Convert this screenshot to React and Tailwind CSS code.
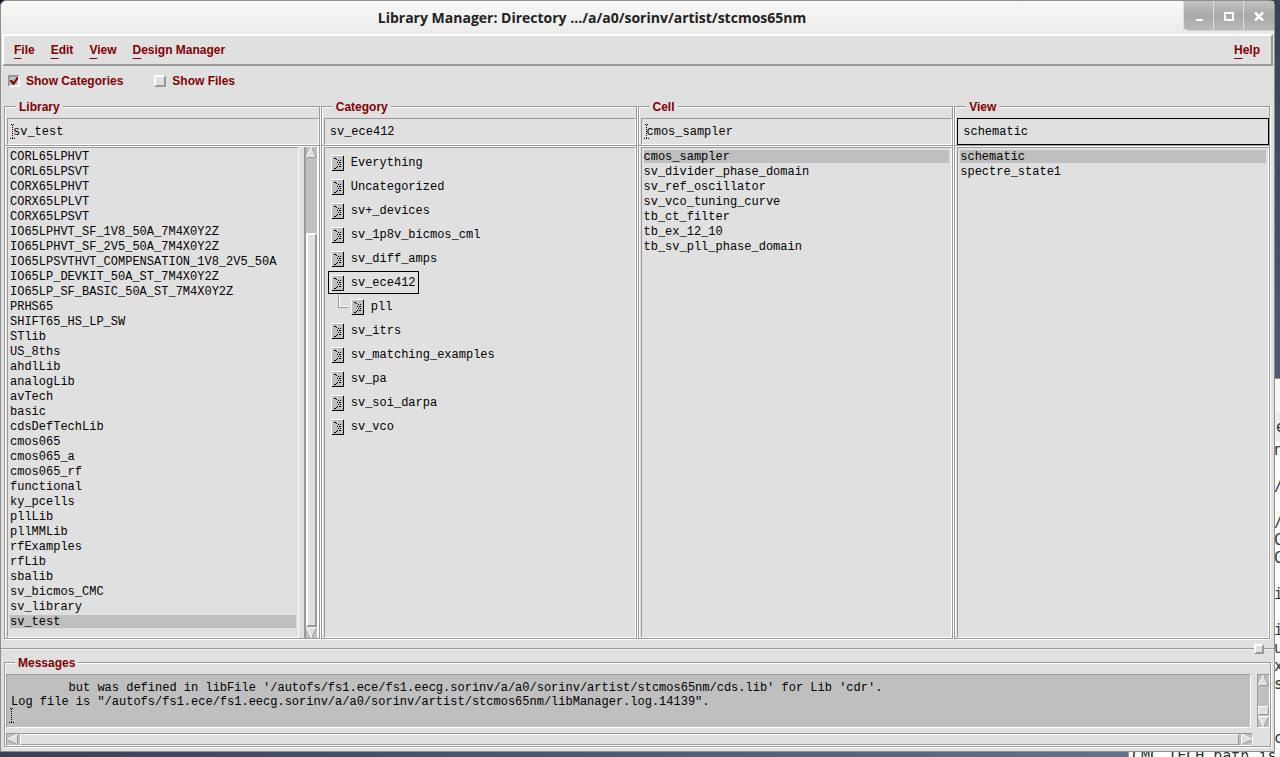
import React, { useState } from "react";

const LIBRARIES = [
  "CORL65LPHVT", "CORL65LPSVT", "CORX65LPHVT", "CORX65LPLVT", "CORX65LPSVT",
  "IO65LPHVT_SF_1V8_50A_7M4X0Y2Z", "IO65LPHVT_SF_2V5_50A_7M4X0Y2Z",
  "IO65LPSVTHVT_COMPENSATION_1V8_2V5_50A", "IO65LP_DEVKIT_50A_ST_7M4X0Y2Z",
  "IO65LP_SF_BASIC_50A_ST_7M4X0Y2Z", "PRHS65", "SHIFT65_HS_LP_SW", "STlib",
  "US_8ths", "ahdlLib", "analogLib", "avTech", "basic", "cdsDefTechLib",
  "cmos065", "cmos065_a", "cmos065_rf", "functional", "ky_pcells", "pllLib",
  "pllMMLib", "rfExamples", "rfLib", "sbalib", "sv_bicmos_CMC", "sv_library",
  "sv_test",
];

const CATEGORIES = [
  { name: "Everything" },
  { name: "Uncategorized" },
  { name: "sv+_devices" },
  { name: "sv_1p8v_bicmos_cml" },
  { name: "sv_diff_amps" },
  { name: "sv_ece412" },
  { name: "pll", child: true },
  { name: "sv_itrs" },
  { name: "sv_matching_examples" },
  { name: "sv_pa" },
  { name: "sv_soi_darpa" },
  { name: "sv_vco" },
];

const CELLS = [
  "cmos_sampler", "sv_divider_phase_domain", "sv_ref_oscillator",
  "sv_vco_tuning_curve", "tb_ct_filter", "tb_ex_12_10",
  "tb_sv_pll_phase_domain",
];

const VIEWS = ["schematic", "spectre_state1"];

const TERMINAL_ROWS = [
  "n", "", "/", "", "/", "C", "C", "", "i", "", "i", "u", "x", "s", "", "", "c",
];

const MESSAGES = `        but was defined in libFile '/autofs/fs1.ece/fs1.eecg.sorinv/a/a0/sorinv/artist/stcmos65nm/cds.lib' for Lib 'cdr'.
Log file is "/autofs/fs1.ece/fs1.eecg.sorinv/a/a0/sorinv/artist/stcmos65nm/libManager.log.14139".
`;

const ETCHED =
  "border border-[#999] shadow-[1px_1px_0_#fff,inset_1px_1px_0_#fff]";
const SUNKEN = "border border-t-[#999] border-l-[#999] border-b-white border-r-white";

function Caret({ className }) {
  return (
    <svg viewBox="0 0 5 15" className={`pointer-events-none absolute h-[15px] w-[5px] ${className}`} shapeRendering="crispEdges" aria-hidden="true">
      <path
        d="M1 .5h1M3 .5h1M2 1.5h1M2 3.5h1M2 5.5h1M2 7.5h1M2 9.500h1M2 11.5h1M2 13.5h1M0 14.5h1M2 14.5h1M4 14.5h1"
        stroke="#000"
        fill="none"
      />
    </svg>
  );
}

function CategoryIcon() {
  return (
    <svg viewBox="0 0 13 16" className="h-4 w-[13px] shrink-0" shapeRendering="crispEdges" aria-hidden="true">
      <rect width="13" height="16" fill="#bfbfbf" />
      <path d="M0 .5h12M.5 0v15" stroke="#fff" />
      <path d="M1 15.5h12M12.5 1v15" stroke="#000" />
      <path
        d="M3 3.5h2M5 4.5h1M7 5.5h1M9 5.5h1M6 7.5h1M8 7.5h2M7 9.5h1M9 9.5h1M6 11.5h1M8 11.5h2M5 12.5h1M3 13.5h2"
        stroke="#000"
      />
    </svg>
  );
}

function Arrow({ dir, label }) {
  const shapes = {
    up: ["M5.5 0 11 11H0Z", "M5.5 0 0 11", "M5.5 0 10.5 10.5H0"],
    down: ["M0 0h11L5.5 11Z", "M11 .5H.5L5.5 11", "M11 0 5.5 11"],
    left: ["M0 5.5 11 0v11Z", "M11 0 0 5.5", "M0 5.5 10.5 10.5V0"],
    right: ["M11 5.5 0 0v11Z", "M.5 11V0L11 5.5", "M11 5.5 0 11"],
  };
  const [fill, light, dark] = shapes[dir];
  return (
    <button aria-label={label} className="flex h-[11px] w-[11px] shrink-0 bg-[#bfbfbf]">
      <svg viewBox="0 0 11 11" className="h-[11px] w-[11px]" aria-hidden="true">
        <path d={fill} fill="#e0e0e0" />
        <path d={dark} stroke="#999" fill="none" />
        <path d={light} stroke="#fff" fill="none" />
      </svg>
    </button>
  );
}

function PanelTitle({ children }) {
  return (
    <span className="relative -mt-2 ml-[9px] self-start bg-[#e0e0e0] px-[3px] text-[12px] leading-4 font-bold text-[#800000]">
      {children}
    </span>
  );
}

function Panel({ title, value, onChange, focused, caret, children }) {
  return (
    <section className={`mr-px mb-px flex min-w-0 flex-col pl-0.5 ${ETCHED}`}>
      <PanelTitle>{title}</PanelTitle>
      <div className="relative mt-[3px] flex">
        <input
          aria-label={title}
          value={value}
          onChange={(e) => onChange(e.target.value)}
          className={`h-[27px] w-full min-w-0 bg-[#e0e0e0] pl-[5px] font-['Liberation_Mono',monospace] text-[12px] ${SUNKEN} ${
            focused ? "outline-1 -outline-offset-1 outline-black" : "outline-none"
          }`}
        />
        {caret && <Caret className="top-1.5 left-[3px]" />}
      </div>
      <div className="-ml-0.5 h-0.5 border-t border-b border-t-[#999] border-b-white" />
      {children}
    </section>
  );
}

function NameList({ items, selected, onSelect, label }) {
  return (
    <ul aria-label={label} className={`min-w-0 flex-1 pt-px pr-0.5 pl-0.5 ${SUNKEN}`}>
      {items.map((item) => (
        <li key={item} className="flex py-px">
          <button
            onClick={() => onSelect(item)}
            className={`h-[13px] w-full text-left leading-[15px] whitespace-nowrap ${
              item === selected ? "bg-[#bfbfbf]" : ""
            }`}
          >
            {item}
          </button>
        </li>
      ))}
    </ul>
  );
}

function MenuItem({ children }) {
  return (
    <button className="leading-4 font-bold text-[#800000] first-letter:underline first-letter:underline-offset-4">
      {children}
    </button>
  );
}

function TitleButton({ label, children }) {
  return (
    <button aria-label={label} className="flex w-[30px] items-center justify-center border-l border-[#ddd] last:w-[31px]">
      <svg viewBox="0 0 14 14" className="mt-0.5 h-3.5 w-3.5" fill="none" stroke="#fff" aria-hidden="true">
        {children}
      </svg>
    </button>
  );
}

export default function App() {
  const [library, setLibrary] = useState("sv_test");
  const [category, setCategory] = useState("sv_ece412");
  const [cell, setCell] = useState("cmos_sampler");
  const [view, setView] = useState("schematic");

  return (
    <div className="relative flex min-h-screen w-full overflow-hidden bg-linear-to-br from-[#0e1222] to-[#6a7694] pr-[5px] pb-[5px] font-['Liberation_Mono',monospace] text-[12px] text-black">
      <div className="absolute top-[378px] right-0 bottom-0 left-[1128px] overflow-hidden border-t border-l border-[#999] bg-white font-['DejaVu_Sans_Mono',monospace] text-[15px] leading-[18px] text-[#2e3436]">
        <div className="h-8 bg-[#f8f8f7]" />
        <div className="h-[30px] bg-[#ededed] pt-[7px] pl-[147px]">e</div>
        {TERMINAL_ROWS.map((row, i) => (
          <div key={i} className="h-[18px] pl-[145px]">{row}</div>
        ))}
        <div className="h-[18px] pl-[3px] whitespace-pre">CMC_TECH path is</div>
      </div>

      <main className="relative flex min-w-0 flex-1 flex-col rounded-t-md border border-[#8f8f8f] bg-[#e0e0e0]">
        <header className="flex h-[33px] rounded-t-md bg-linear-to-b from-[#f8f8f7] to-[#ebebea]">
          <h1 className="flex-1 pt-[7px] text-center font-['Open_Sans',sans-serif] text-[14px] leading-5 font-bold text-[#222]">
            Library Manager: Directory .../a/a0/sorinv/artist/stcmos65nm
          </h1>
          <div className="flex h-[30px] rounded-bl-md border-b border-[#ccc] bg-linear-to-b from-[#c2c2c2] via-[#a9a9a9] to-[#b9b9b9]">
            <TitleButton label="Minimize"><path d="M4 10h7" strokeWidth="2" /></TitleButton>
            <TitleButton label="Maximize"><path d="M3 3h8v7h-8z" strokeWidth="2" /></TitleButton>
            <TitleButton label="Close"><path d="m3 2.500 8 8m0-8-8 8" strokeWidth="2.6" /></TitleButton>
          </div>
        </header>

        <nav className="mx-px flex h-8 items-center gap-4 border-2 border-t-white border-r-[#999] border-b-[#999] border-l-white pr-[11px] pl-2.5 font-['Liberation_Sans',sans-serif] text-[12px]">
          <MenuItem>File</MenuItem>
          <MenuItem>Edit</MenuItem>
          <MenuItem>View</MenuItem>
          <MenuItem>Design Manager</MenuItem>
          <span className="flex-1" />
          <MenuItem>Help</MenuItem>
        </nav>

        <div className="flex h-10 items-start gap-[31px] pt-[7px] pl-[7px] font-['Liberation_Sans',sans-serif] text-[12px] leading-4 font-bold text-[#800000]">
          <label className="flex items-center gap-1.5">
            <span className="relative flex">
              <input
                type="checkbox"
                defaultChecked
                className="peer h-3 w-3 appearance-none border-2 border-t-white border-r-[#999] border-b-[#999] border-l-white bg-[#e0e0e0] checked:border-t-[#999] checked:border-r-white checked:border-b-white checked:border-l-[#999] checked:bg-[#bfbfbf]"
              />
              <svg viewBox="0 0 12 12" className="pointer-events-none absolute hidden h-3 w-3 peer-checked:block" aria-hidden="true">
                <path d="M2 5h2l1.500 2L9 2h1v2L6 10H5L2 6Z" fill="#800000" />
              </svg>
            </span>
            Show Categories
          </label>
          <label className="flex items-center gap-1.5">
            <input
              type="checkbox"
              className="h-3 w-3 appearance-none border-2 border-t-white border-r-[#999] border-b-[#999] border-l-white bg-[#e0e0e0] checked:bg-[#800000]"
            />
            Show Files
          </label>
        </div>

        <div className="grid flex-1 grid-cols-4 px-[3px] font-['Liberation_Sans',sans-serif]">
          <Panel title="Library" value={library} onChange={setLibrary} caret>
            <div className="flex flex-1 gap-[5px] font-['Liberation_Mono',monospace]">
              <NameList label="Libraries" items={LIBRARIES} selected={library} onSelect={setLibrary} />
              <div className="flex w-[15px] shrink-0 flex-col border-r-2 border-l-2 border-r-white border-l-[#999] bg-[#bfbfbf]">
                <Arrow dir="up" label="Scroll libraries up" />
                <div className="h-[75px] shrink-0" />
                <div className="flex-1 border-2 border-t-white border-r-[#999] border-b-[#999] border-l-white bg-[#e0e0e0]" />
                <Arrow dir="down" label="Scroll libraries down" />
              </div>
            </div>
          </Panel>

          <Panel title="Category" value={category} onChange={setCategory}>
            <ul aria-label="Categories" className={`flex-1 pt-[3px] pl-[3px] font-['Liberation_Mono',monospace] ${SUNKEN}`}>
              {CATEGORIES.map((c) => (
                <li key={c.name} className="flex h-6 items-start">
                  {c.child && (
                    <span className="ml-2.5 h-[13px] w-2.5 border-b border-l border-[#999] shadow-[inset_1px_-1px_0_#fff]" />
                  )}
                  <button
                    onClick={() => setCategory(c.name)}
                    className={`flex h-[23px] items-center gap-[7px] border pr-0.5 pl-0.5 whitespace-nowrap ${
                      c.name === category ? "border-black" : "border-transparent"
                    }`}
                  >
                    <CategoryIcon />
                    {c.name}
                  </button>
                </li>
              ))}
            </ul>
          </Panel>

          <Panel title="Cell" value={cell} onChange={setCell} caret>
            <div className="flex flex-1 font-['Liberation_Mono',monospace]">
              <NameList label="Cells" items={CELLS} selected={cell} onSelect={setCell} />
            </div>
          </Panel>

          <Panel title="View" value={view} onChange={setView} focused>
            <div className="flex flex-1 font-['Liberation_Mono',monospace]">
              <NameList label="Views" items={VIEWS} selected={view} onSelect={setView} />
            </div>
          </Panel>
        </div>

        <div className="mt-1 flex h-[10px] items-center">
          <span className="h-0.5 flex-1 border-t border-b border-t-[#999] border-b-[#f4f4f4]" />
          <button aria-label="Resize panes" className="h-2.5 w-2.5 border-2 border-t-white border-r-[#999] border-b-[#999] border-l-white bg-[#e0e0e0]" />
          <span className="h-0.5 w-2.5 border-t border-b border-t-[#999] border-b-[#f4f4f4]" />
        </div>

        <section className={`mx-[3px] mt-2 mb-1 flex flex-col pl-px font-['Liberation_Sans',sans-serif] ${ETCHED}`}>
          <PanelTitle>Messages</PanelTitle>
          <div className="mt-[3px] flex gap-1.5 font-['Liberation_Mono',monospace]">
            <div className="relative flex flex-1">
              <textarea
                readOnly
                aria-label="Messages"
                value={MESSAGES}
                rows={3}
                className={`h-[54px] w-full resize-none overflow-hidden bg-[#bfbfbf] pt-1.5 pl-1 leading-[14px] whitespace-pre outline-none ${SUNKEN}`}
              />
              <Caret className="top-[34px] left-[3px]" />
            </div>
            <div className="flex h-[54px] w-[13px] shrink-0 flex-col border border-t-[#999] border-r-white border-b-white border-l-[#999] bg-[#bfbfbf]">
              <Arrow dir="up" label="Scroll messages up" />
              <div className="flex-1" />
              <div className="mb-px h-[9px] border border-t-white border-r-[#999] border-b-[#999] border-l-white bg-[#e0e0e0]" />
              <Arrow dir="down" label="Scroll messages down" />
            </div>
          </div>
          <div className={`mt-[5px] mr-[17px] flex h-[13px] gap-0.5 bg-[#bfbfbf] ${SUNKEN}`}>
            <Arrow dir="left" label="Scroll messages left" />
            <div className="flex-1 border border-t-white border-r-[#999] border-b-[#999] border-l-white bg-[#e0e0e0]" />
            <Arrow dir="right" label="Scroll messages right" />
          </div>
        </section>
      </main>
    </div>
  );
}
